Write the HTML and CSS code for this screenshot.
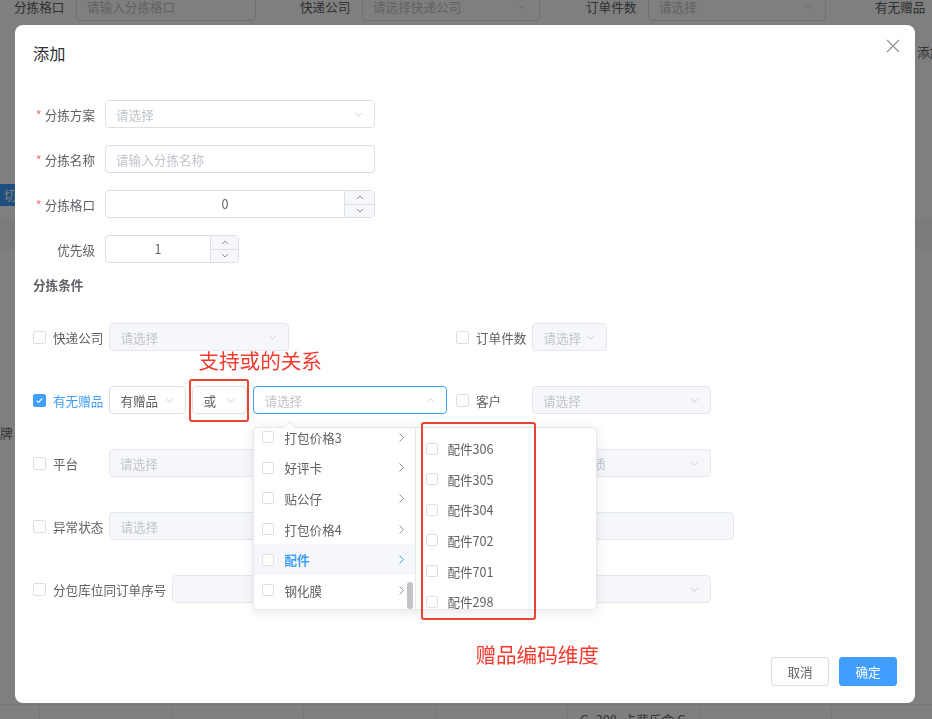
FILE: index.html
```html
<!DOCTYPE html>
<html lang="zh-CN">
<head>
<meta charset="utf-8">
<title>添加</title>
<link rel="stylesheet" href="styles.css">
</head>
<body>
<div class="page">
  <div class="filters">
    <span class="f-label f-l1">分拣格口</span>
    <div class="f-input f-i1"><span class="ph">请输入分拣格口</span></div>
    <span class="f-label f-l2">快递公司</span>
    <div class="f-input f-i2"><span class="ph">请选择快递公司</span><svg class="arrow" viewBox="0 0 10 6"><path d="M1 1l4 4 4-4" fill="none" stroke="currentColor"/></svg></div>
    <span class="f-label f-l3">订单件数</span>
    <div class="f-input f-i2"><span class="ph">请选择</span><svg class="arrow" viewBox="0 0 10 6"><path d="M1 1l4 4 4-4" fill="none" stroke="currentColor"/></svg></div>
    <span class="f-label f-l4">有无赠品</span>
  </div>
  <div class="toolbar">添加</div>
  <div class="tab-btn">切换</div>
  <div class="thead"></div>
  <div class="cell-text">牌</div>
  <div class="trow">
    <div class="td"></div><div class="td"></div><div class="td"></div><div class="td"></div>
    <div class="td">G_308_卡斐乐盒 G</div><div class="td"></div><div class="td"></div>
  </div>
</div>

<div class="mask"></div>

<div class="dialog-wrap">
  <div class="dialog">
    <div class="dlg-header">
      <span class="dlg-title">添加</span>
      <svg class="dlg-close" viewBox="0 0 14 14"><path d="M1 1l12 12M13 1L1 13" stroke="#909399" stroke-width="1.2" fill="none"/></svg>
    </div>
    <div class="dlg-body">
      <div class="form-item">
        <label class="fi-label"><i class="req">*</i>分拣方案</label>
        <div class="sel w270"><span class="ph">请选择</span><svg class="arrow" viewBox="0 0 10 6"><path d="M1 1l4 4 4-4" fill="none" stroke="currentColor"/></svg></div>
      </div>
      <div class="form-item">
        <label class="fi-label"><i class="req">*</i>分拣名称</label>
        <div class="sel w270"><span class="ph">请输入分拣名称</span></div>
      </div>
      <div class="form-item">
        <label class="fi-label"><i class="req">*</i>分拣格口</label>
        <div class="num w270">
          <span class="num-val">0</span>
          <div class="num-ctrl c30">
            <span><svg class="mini" viewBox="0 0 8 5"><path d="M1 4l3-3 3 3" fill="none" stroke="currentColor"/></svg></span>
            <span><svg class="mini" viewBox="0 0 8 5"><path d="M1 1l3 3 3-3" fill="none" stroke="currentColor"/></svg></span>
          </div>
        </div>
      </div>
      <div class="form-item last">
        <label class="fi-label">优先级</label>
        <div class="num w134">
          <span class="num-val">1</span>
          <div class="num-ctrl c28">
            <span><svg class="mini" viewBox="0 0 8 5"><path d="M1 4l3-3 3 3" fill="none" stroke="currentColor"/></svg></span>
            <span><svg class="mini" viewBox="0 0 8 5"><path d="M1 1l3 3 3-3" fill="none" stroke="currentColor"/></svg></span>
          </div>
        </div>
      </div>

      <div class="sec-title">分拣条件</div>

      <div class="conds">
        <div class="cond">
          <span class="cb"></span><span class="cond-label">快递公司</span>
          <div class="sel dis w180"><span class="ph">请选择</span><svg class="arrow" viewBox="0 0 10 6"><path d="M1 1l4 4 4-4" fill="none" stroke="currentColor"/></svg></div>
        </div>
        <div class="cond">
          <span class="cb"></span><span class="cond-label">订单件数</span>
          <div class="sel dis w75"><span class="ph">请选择</span><svg class="arrow" viewBox="0 0 10 6"><path d="M1 1l4 4 4-4" fill="none" stroke="currentColor"/></svg></div>
        </div>

        <div class="cond">
          <span class="cb on"><svg viewBox="0 0 13 13"><path d="M3.3 6.6l2.1 2.1 4.3-4.6" stroke="#fff" stroke-width="1.4" fill="none"/></svg></span><span class="cond-label on">有无赠品</span>
          <div class="sel w77"><span class="val">有赠品</span><svg class="arrow" viewBox="0 0 10 6"><path d="M1 1l4 4 4-4" fill="none" stroke="currentColor"/></svg></div>
          <div class="or-wrap">
            <div class="sel w55"><span class="val">或</span><svg class="arrow" viewBox="0 0 10 6"><path d="M1 1l4 4 4-4" fill="none" stroke="currentColor"/></svg></div>
            <span class="ann ann1">支持或的关系</span>
          </div>
          <div class="casc-wrap">
            <div class="sel focus w194"><span class="ph">请选择</span><svg class="arrow" viewBox="0 0 10 6"><path d="M1 5l4-4 4 4" fill="none" stroke="currentColor"/></svg></div>
            <div class="casc-panel">
              <div class="menu-l">
                <ul class="mlist">
                  <li class="mi"><span class="cb sm"></span><span class="txt">打包价格3</span><svg class="gt" viewBox="0 0 5 9"><path d="M.5.5l4 4-4 4" fill="none" stroke="currentColor"/></svg></li>
                  <li class="mi"><span class="cb sm"></span><span class="txt">好评卡</span><svg class="gt" viewBox="0 0 5 9"><path d="M.5.5l4 4-4 4" fill="none" stroke="currentColor"/></svg></li>
                  <li class="mi"><span class="cb sm"></span><span class="txt">贴公仔</span><svg class="gt" viewBox="0 0 5 9"><path d="M.5.5l4 4-4 4" fill="none" stroke="currentColor"/></svg></li>
                  <li class="mi"><span class="cb sm"></span><span class="txt">打包价格4</span><svg class="gt" viewBox="0 0 5 9"><path d="M.5.5l4 4-4 4" fill="none" stroke="currentColor"/></svg></li>
                  <li class="mi act"><span class="cb sm"></span><span class="txt">配件</span><svg class="gt" viewBox="0 0 5 9"><path d="M.5.5l4 4-4 4" fill="none" stroke="currentColor"/></svg></li>
                  <li class="mi"><span class="cb sm"></span><span class="txt">钢化膜</span><svg class="gt" viewBox="0 0 5 9"><path d="M.5.5l4 4-4 4" fill="none" stroke="currentColor"/></svg></li>
                </ul>
                <span class="thumb"></span>
              </div>
              <div class="menu-r">
                <ul class="mlist">
                  <li class="mi r"><span class="cb sm"></span><span class="txt">配件306</span></li>
                  <li class="mi r"><span class="cb sm"></span><span class="txt">配件305</span></li>
                  <li class="mi r"><span class="cb sm"></span><span class="txt">配件304</span></li>
                  <li class="mi r"><span class="cb sm"></span><span class="txt">配件702</span></li>
                  <li class="mi r"><span class="cb sm"></span><span class="txt">配件701</span></li>
                  <li class="mi r"><span class="cb sm"></span><span class="txt">配件298</span></li>
                </ul>
              </div>
              <span class="redbox2"></span>
              <span class="ann ann2">赠品编码维度</span>
            </div>
          </div>
        </div>
        <div class="cond">
          <span class="cb"></span><span class="cond-label">客户</span>
          <div class="sel dis w179"><span class="ph">请选择</span><svg class="arrow" viewBox="0 0 10 6"><path d="M1 1l4 4 4-4" fill="none" stroke="currentColor"/></svg></div>
        </div>

        <div class="cond">
          <span class="cb"></span><span class="cond-label">平台</span>
          <div class="sel dis w180"><span class="ph">请选择</span><svg class="arrow" viewBox="0 0 10 6"><path d="M1 1l4 4 4-4" fill="none" stroke="currentColor"/></svg></div>
        </div>
        <div class="cond">
          <span class="cb"></span><span class="cond-label">品质</span>
          <div class="sel dis w179"><span class="ph">请选择品质</span><svg class="arrow" viewBox="0 0 10 6"><path d="M1 1l4 4 4-4" fill="none" stroke="currentColor"/></svg></div>
        </div>

        <div class="cond">
          <span class="cb"></span><span class="cond-label">异常状态</span>
          <div class="sel dis w180"><span class="ph">请选择</span><svg class="arrow" viewBox="0 0 10 6"><path d="M1 1l4 4 4-4" fill="none" stroke="currentColor"/></svg></div>
        </div>
        <div class="cond">
          <span class="cb"></span><span class="cond-label">备注</span>
          <div class="sel dis w202"><span class="ph">请输入</span></div>
        </div>

        <div class="cond">
          <span class="cb"></span><span class="cond-label">分包库位同订单序号</span>
          <div class="sel dis w180"><span></span><svg class="arrow" viewBox="0 0 10 6"><path d="M1 1l4 4 4-4" fill="none" stroke="currentColor"/></svg></div>
        </div>
        <div class="cond">
          <span class="cb"></span><span class="cond-label">店铺</span>
          <div class="sel dis w179"><span class="ph">请选择</span><svg class="arrow" viewBox="0 0 10 6"><path d="M1 1l4 4 4-4" fill="none" stroke="currentColor"/></svg></div>
        </div>
      </div>
    </div>
    <div class="dlg-footer">
      <button class="btn">取消</button>
      <button class="btn primary">确定</button>
    </div>
  </div>
</div>
</body>
</html>
```

FILE: styles.css
```css
html, body {
  margin: 0;
  padding: 0;
}
body {
  width: 932px;
  height: 719px;
  overflow: hidden;
  background: #fff;
  font-family: "Noto Sans CJK SC", "Noto Sans", sans-serif;
  font-size: 12.6px;
  color: #606266;
}
ul { list-style: none; margin: 0; padding: 0; }

/* ---------- background page ---------- */
.page {
  display: flex;
  flex-direction: column;
}
.filters {
  display: flex;
  align-items: center;
  margin-top: -9px;
  height: 30px;
  white-space: nowrap;
}
.f-label {
  width: 50px;
  text-align: right;
  margin-right: 12px;
  flex: none;
}
.f-l1 { margin-left: 14px; }
.f-l2 { margin-left: 44px; }
.f-l3 { margin-left: 46px; }
.f-l4 { margin-left: 49px; }
.f-input {
  flex: none;
  height: 30px;
  box-sizing: border-box;
  border: 1px solid #dcdfe6;
  border-radius: 4px;
  display: flex;
  align-items: center;
  justify-content: space-between;
  padding: 0 12px 0 10px;
}
.f-i1 { width: 180px; }
.f-i2 { width: 178px; }
.toolbar {
  margin-top: 17px;
  height: 28px;
  line-height: 28px;
  padding-left: 917px;
  white-space: nowrap;
}
.tab-btn {
  margin-top: 118px;
  height: 22px;
  width: 16px;
  box-sizing: border-box;
  background: #409eff;
  color: #fff;
  line-height: 22px;
  padding-left: 4px;
  overflow: hidden;
  white-space: nowrap;
}
.thead {
  margin-top: 13px;
  height: 31px;
  background: #f5f7fa;
}
.cell-text {
  margin-top: 177px;
  height: 12px;
  line-height: 12px;
}
.trow {
  margin-top: 265px;
  display: flex;
  height: 30px;
  border-top: 1px solid #ebeef5;
  padding-left: 39px;
}
.td {
  width: 132px;
  flex: none;
  box-sizing: border-box;
  border-left: 1px solid #ebeef5;
  padding: 5px 12px;
  white-space: nowrap;
}

/* ---------- mask + dialog ---------- */
.mask {
  position: fixed;
  inset: 0;
  background: rgba(0, 0, 0, 0.5);
}
.dialog-wrap {
  position: fixed;
  inset: 0;
}
.dialog {
  margin: 25px 0 0 15px;
  width: 900px;
  height: 678px;
  background: #fff;
  border-radius: 8px;
  display: flex;
  flex-direction: column;
  box-sizing: border-box;
}
.dlg-header {
  display: flex;
  justify-content: space-between;
  align-items: flex-start;
  padding: 16px 15px 0 18px;
}
.dlg-title {
  font-size: 16.2px;
  line-height: 24px;
  color: #303133;
}
.dlg-close {
  width: 14px;
  height: 14px;
  margin-top: -2px;
}
.dlg-body {
  flex: 1;
  padding: 35px 18px 0;
}

/* form */
.form-item {
  display: flex;
  align-items: center;
  height: 28px;
  margin-bottom: 17px;
}
.form-item.last { margin-bottom: 12px; }
.fi-label {
  width: 72px;
  flex: none;
  box-sizing: border-box;
  padding-right: 10px;
  text-align: right;
  white-space: nowrap;
  color: #606266;
}
.req {
  color: #f56c6c;
  font-style: normal;
  margin-right: 3px;
}
.sel {
  flex: none;
  height: 28px;
  box-sizing: border-box;
  border: 1px solid #dcdfe6;
  border-radius: 4px;
  background: #fff;
  display: flex;
  align-items: center;
  justify-content: space-between;
  padding: 0 11px 0 10px;
  white-space: nowrap;
  overflow: hidden;
}
.sel.dis {
  background: #f5f7fa;
  border-color: #e4e7ed;
}
.sel.focus { border-color: #409eff; }
.ph { color: #c0c4cc; }
.val { color: #606266; }
.arrow {
  width: 9px;
  height: 5px;
  color: #c0c4cc;
  flex: none;
}
.w270 { width: 270px; }
.w134 { width: 134px; }
.w180 { width: 180px; }
.w179 { width: 179px; }
.w202 { width: 202px; }
.w194 { width: 194px; }
.w77 { width: 77px; }
.w75 { width: 75px; }
.w55 { width: 55px; }

.num {
  flex: none;
  display: flex;
  height: 28px;
  box-sizing: border-box;
  border: 1px solid #dcdfe6;
  border-radius: 4px;
  overflow: hidden;
}
.num-val {
  flex: 1;
  text-align: center;
  line-height: 26px;
  color: #606266;
}
.num-ctrl {
  display: flex;
  flex-direction: column;
  background: #f5f7fa;
  border-left: 1px solid #dcdfe6;
  color: #909399;
}
.num-ctrl.c30 { width: 29px; }
.num-ctrl.c28 { width: 27px; }
.num-ctrl span {
  flex: 1;
  display: flex;
  align-items: center;
  justify-content: center;
}
.num-ctrl span + span { border-top: 1px solid #dcdfe6; }
.mini { width: 8px; height: 5px; }

.sec-title {
  font-weight: bold;
  line-height: 20px;
  color: #606266;
  margin-bottom: 28px;
}

/* conditions */
.conds {
  display: grid;
  grid-template-columns: 423px 1fr;
  row-gap: 35px;
  align-items: center;
}
.cond {
  display: flex;
  align-items: center;
  height: 28px;
}
.cb {
  flex: none;
  width: 13px;
  height: 13px;
  box-sizing: border-box;
  border: 1px solid #dcdfe6;
  border-radius: 2px;
  background: #fff;
  margin-right: 7px;
  display: flex;
}
.cb svg { width: 100%; height: 100%; }
.cb.on {
  background: #409eff;
  border-color: #409eff;
}
.cb.sm {
  width: 12px;
  height: 12px;
}
.cond-label {
  min-width: 50px;
  margin-right: 6px;
  white-space: nowrap;
}
.cond-label.on { color: #409eff; }

.or-wrap {
  position: relative;
  margin-left: 6px;
}
.or-wrap::after {
  content: "";
  position: absolute;
  left: -3px;
  top: -7px;
  right: -2px;
  bottom: -8px;
  border: 2px solid #ea4335;
  border-radius: 3px;
}
.ann {
  position: absolute;
  color: #f23a2e;
  font-size: 20.6px;
  line-height: 24px;
  white-space: nowrap;
}
.ann1 { left: 6px; top: -38px; }

.casc-wrap {
  position: relative;
  margin-left: 6px;
}
.casc-panel {
  position: absolute;
  left: 0;
  top: 41px;
  z-index: 5;
  display: flex;
  height: 183px;
  box-sizing: border-box;
  background: #fff;
  border: 1px solid #e4e7ed;
  border-radius: 4px;
  box-shadow: 0 2px 12px rgba(0, 0, 0, 0.1);
}
.casc-panel::before {
  content: "";
  position: absolute;
  left: 31px;
  top: -5px;
  width: 8px;
  height: 8px;
  background: #fff;
  border-left: 1px solid #e4e7ed;
  border-top: 1px solid #e4e7ed;
  transform: rotate(45deg);
}
.menu-l {
  position: relative;
  width: 162px;
  box-sizing: border-box;
  border-right: 1px solid #e4e7ed;
  overflow: hidden;
}
.menu-l .mlist { margin-top: -6px; }
.menu-r {
  width: 180px;
  padding-top: 5.4px;
  box-sizing: border-box;
  overflow: hidden;
}
.mi {
  height: 30.6px;
  display: flex;
  align-items: center;
  padding: 0 11px 0 8px;
  color: #606266;
  white-space: nowrap;
}
.mi .cb { margin-right: 10px; }
.mi .txt { flex: 1; }
.mi.r { padding-left: 10px; }
.mi.r .cb { margin-right: 9px; }
.gt {
  width: 5px;
  height: 9px;
  color: #909399;
  flex: none;
}
.mi.act {
  background: #f5f7fa;
  color: #409eff;
  font-weight: bold;
}
.mi.act .gt { color: #409eff; }
.thumb {
  position: absolute;
  right: 2px;
  top: 154px;
  width: 6px;
  height: 27px;
  border-radius: 3px;
  background: #c1c3c8;
}
.redbox2 {
  position: absolute;
  left: 167px;
  top: -6px;
  width: 115px;
  height: 198px;
  box-sizing: border-box;
  border: 2px solid #ea4335;
  border-radius: 3px;
}
.ann2 { left: 221px; top: 214px; }

/* footer */
.dlg-footer {
  display: flex;
  justify-content: flex-end;
  gap: 10px;
  padding: 0 18px 17px;
}
.btn {
  width: 58px;
  height: 29px;
  padding: 0;
  border: 1px solid #dcdfe6;
  border-radius: 3px;
  background: #fff;
  color: #606266;
  font: inherit;
}
.btn.primary {
  background: #409eff;
  border-color: #409eff;
  color: #fff;
}
```
